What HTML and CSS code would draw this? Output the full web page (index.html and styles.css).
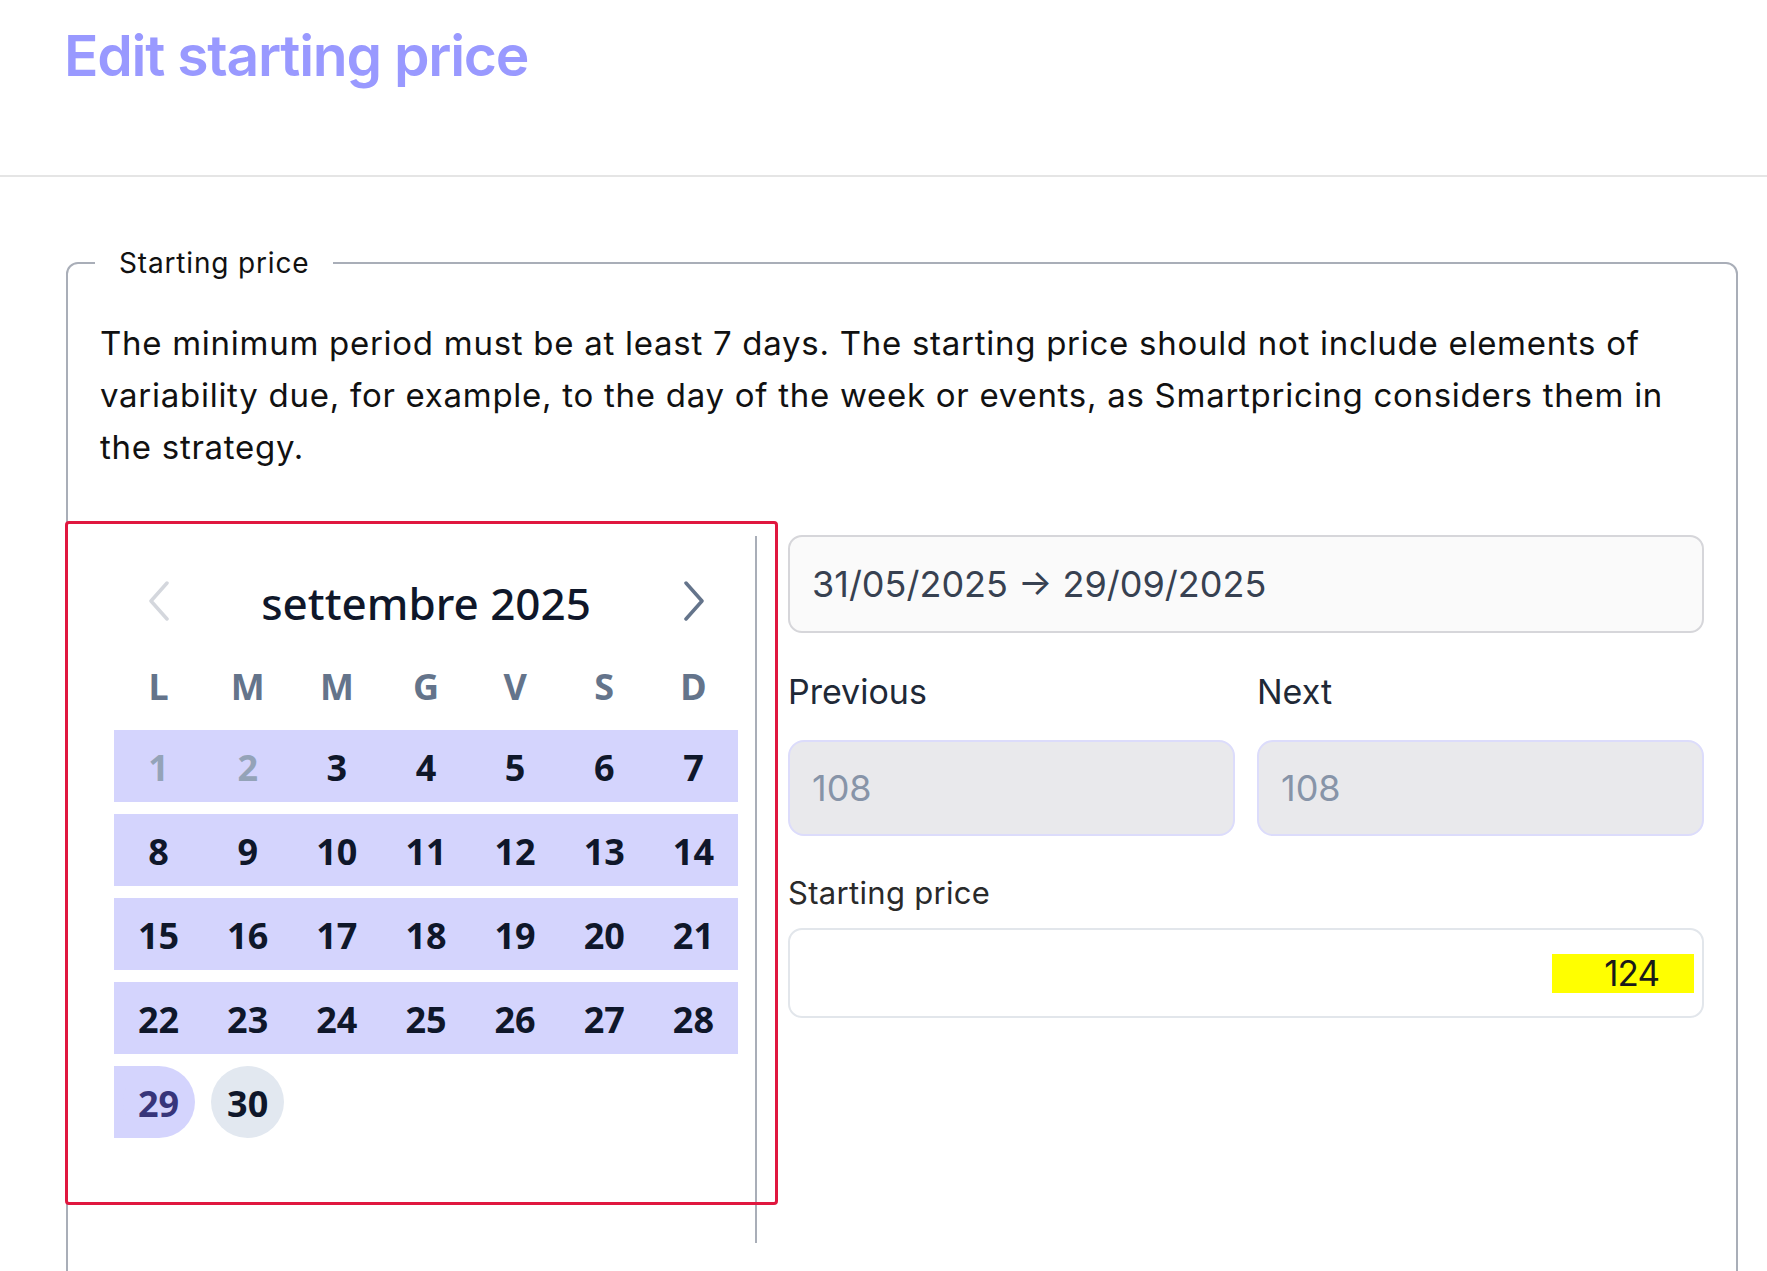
FILE: index.html
```html
<!DOCTYPE html>
<html lang="en">
<head>
<meta charset="utf-8">
<title>Edit starting price</title>
<link rel="stylesheet" href="styles.css">
</head>
<body>
<div class="page">
  <header class="header">
    <h1 class="title">Edit starting price</h1>
  </header>
  <fieldset class="group">
    <legend class="group-legend">Starting price</legend>
    <p class="intro">The minimum period must be at least 7 days. The starting price should not include elements of variability due, for example, to the day of the week or events, as Smartpricing considers them in the strategy.</p>
    <div class="editor">
      <div class="calendar">
        <div class="highlight"></div>
        <div class="cal-head">
          <span class="nav nav-prev">
            <svg width="24" height="40" viewBox="0 0 24 40"><polyline points="20,2 4,20 20,38" fill="none" stroke="currentColor" stroke-width="3.5" stroke-linecap="round" stroke-linejoin="round"/></svg>
          </span>
          <span class="month">settembre 2025</span>
          <span class="nav nav-next">
            <svg width="24" height="40" viewBox="0 0 24 40"><polyline points="4,2 20,20 4,38" fill="none" stroke="currentColor" stroke-width="3.5" stroke-linecap="round" stroke-linejoin="round"/></svg>
          </span>
        </div>
        <div class="weekdays">
          <span>L</span><span>M</span><span>M</span><span>G</span><span>V</span><span>S</span><span>D</span>
        </div>
        <div class="weeks">
          <div class="week band">
            <span class="day muted">1</span><span class="day muted">2</span><span class="day">3</span><span class="day">4</span><span class="day">5</span><span class="day">6</span><span class="day">7</span>
          </div>
          <div class="week band">
            <span class="day">8</span><span class="day">9</span><span class="day">10</span><span class="day">11</span><span class="day">12</span><span class="day">13</span><span class="day">14</span>
          </div>
          <div class="week band">
            <span class="day">15</span><span class="day">16</span><span class="day">17</span><span class="day">18</span><span class="day">19</span><span class="day">20</span><span class="day">21</span>
          </div>
          <div class="week band">
            <span class="day">22</span><span class="day">23</span><span class="day">24</span><span class="day">25</span><span class="day">26</span><span class="day">27</span><span class="day">28</span>
          </div>
          <div class="week">
            <span class="day range-end"><span class="dot">29</span></span>
            <span class="day today"><span class="dot">30</span></span>
            <span class="day"></span><span class="day"></span><span class="day"></span><span class="day"></span><span class="day"></span>
          </div>
        </div>
      </div>
      <div class="fields">
        <div class="range-input">31/05/2025 → 29/09/2025</div>
        <div class="pair">
          <div class="pair-col">
            <div class="label label-lg">Previous</div>
            <div class="readonly">108</div>
          </div>
          <div class="pair-col">
            <div class="label label-lg">Next</div>
            <div class="readonly">108</div>
          </div>
        </div>
        <div class="label label-sm">Starting price</div>
        <div class="price-input"><span class="price-value">124</span></div>
      </div>
    </div>
  </fieldset>
</div>
</body>
</html>
```

FILE: styles.css
```css
* { box-sizing: border-box; }
html, body { margin: 0; padding: 0; background: #fff; }
body { font-family: Inter, "Noto Sans", sans-serif; color: #111; }

.page { height: 1271px; overflow: hidden; }

.header {
  height: 177px;
  padding: 21px 0 0 64px;
  border-bottom: 2px solid #e5e5e5;
}
.title {
  margin: 0;
  font-size: 57px;
  line-height: 70px;
  font-weight: 600;
  letter-spacing: -0.022em;
  color: #9999ff;
}

.group {
  margin: 69px 29px 0 66px;
  padding: 37px 32px 80px 32px;
  border: 2px solid #a9aeb8;
  border-radius: 12px;
  min-width: 0;
}
.group-legend {
  margin-left: -5px;
  padding: 0 24px;
  font-size: 28px;
  line-height: 34px;
  letter-spacing: 0.03em;
  color: #111;
}
.intro {
  margin: 0;
  font-size: 33px;
  line-height: 52px;
  letter-spacing: 0.022em;
  color: #111;
}

.editor {
  display: flex;
  margin: 63px 0 0 -32px;
}

.calendar {
  position: relative;
  width: 689px;
  flex: none;
  padding: 35px 17px 105px 46px;
  border-right: 2px solid #a9aeb8;
  font-family: "Noto Sans", "Open Sans", sans-serif;
}
.highlight {
  position: absolute;
  left: -3px;
  top: -15px;
  width: 713px;
  height: 684px;
  border: 3px solid #e0173f;
  border-radius: 4px;
  pointer-events: none;
}
.cal-head {
  display: flex;
  align-items: center;
  height: 60px;
}
.nav {
  width: 89px;
  display: flex;
  justify-content: center;
  align-items: center;
}
.nav-prev { color: #d4d7dd; }
.nav-next { color: #64748b; }
.month {
  flex: 1;
  text-align: center;
  font-size: 44px;
  font-weight: 500;
  color: #0f172a;
  line-height: 60px;
  padding-top: 4px;
}
.weekdays {
  display: grid;
  grid-template-columns: repeat(7, 1fr);
  margin-top: 32px;
  height: 48px;
  line-height: 48px;
  text-align: center;
  font-size: 36px;
  font-weight: 700;
  color: #64748b;
}
.weeks {
  margin-top: 19px;
  display: flex;
  flex-direction: column;
  gap: 12px;
}
.week {
  display: grid;
  grid-template-columns: repeat(7, 1fr);
  height: 72px;
}
.band { background: #d4d4fd; }
.day {
  display: flex;
  align-items: center;
  justify-content: center;
  padding-top: 3px;
  font-size: 36px;
  font-weight: 700;
  color: #0f172a;
}
.day.muted { color: #94a3b8; }
.dot {
  width: 72px;
  height: 72px;
  border-radius: 50%;
  display: flex;
  align-items: center;
  justify-content: center;
  padding-top: 3px;
}
.range-end, .today { padding-top: 0; }
.range-end { background: linear-gradient(90deg, #d4d4fd 50%, transparent 50%); }
.range-end .dot { background: #d4d4fd; color: #37357a; }
.today .dot { background: #e2e8f0; width: 73px; }

.fields {
  flex: 1;
  margin-left: 31px;
  margin-top: -1px;
  display: flex;
  flex-direction: column;
}
.range-input {
  height: 98px;
  padding-left: 22px;
  display: flex;
  align-items: center;
  border: 2px solid #d6d6da;
  border-radius: 14px;
  background: #fafafa;
  font-size: 36px;
  color: #374151;
}
.pair {
  display: flex;
  gap: 22px;
}
.pair-col { flex: 1; }
.label { color: #1f2937; }
.label-lg {
  margin-top: 38px;
  font-size: 34px;
  line-height: 41px;
}
.readonly {
  margin-top: 28px;
  height: 96px;
  padding-left: 22px;
  display: flex;
  align-items: center;
  border: 2px solid #dcdcfb;
  border-radius: 16px;
  background: #e9e9ec;
  font-size: 36px;
  color: #8794a8;
}
.label-sm {
  margin-top: 39px;
  font-size: 31px;
  line-height: 36px;
  letter-spacing: 0.01em;
  color: #2a2a2a;
}
.price-input {
  margin-top: 17px;
  height: 90px;
  padding-right: 8px;
  display: flex;
  align-items: center;
  justify-content: flex-end;
  border: 2px solid #e2e6eb;
  border-radius: 14px;
  background: #fff;
}
.price-value {
  width: 142px;
  height: 39px;
  padding-right: 35px;
  background: #ffff00;
  text-align: right;
  font-size: 35px;
  line-height: 39px;
  letter-spacing: -1px;
  color: #1a1a1a;
}
```
